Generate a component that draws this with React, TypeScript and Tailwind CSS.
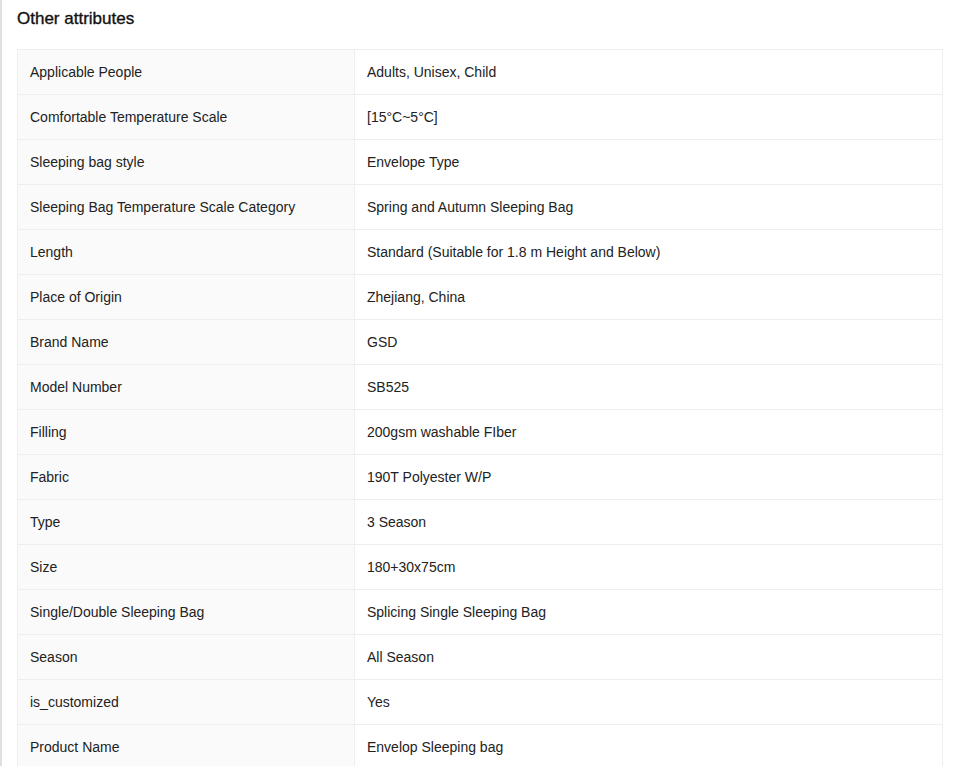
import React from "react";

const rows: [string, string][] = [
  ["Applicable People", "Adults, Unisex, Child"],
  ["Comfortable Temperature Scale", "[15°C~5°C]"],
  ["Sleeping bag style", "Envelope Type"],
  ["Sleeping Bag Temperature Scale Category", "Spring and Autumn Sleeping Bag"],
  ["Length", "Standard (Suitable for 1.8 m Height and Below)"],
  ["Place of Origin", "Zhejiang, China"],
  ["Brand Name", "GSD"],
  ["Model Number", "SB525"],
  ["Filling", "200gsm washable FIber"],
  ["Fabric", "190T Polyester W/P"],
  ["Type", "3 Season"],
  ["Size", "180+30x75cm"],
  ["Single/Double Sleeping Bag", "Splicing Single Sleeping Bag"],
  ["Season", "All Season"],
  ["is_customized", "Yes"],
  ["Product Name", "Envelop Sleeping bag"],
];

export default function App() {
  return (
    <div
      className="h-[766px] overflow-hidden bg-white border-l-2 border-[#e0e0e0] text-[#222]"
      style={{ fontFamily: '"Liberation Sans", Arial, sans-serif' }}
    >
      <div className="pl-[15px] pr-[16px]">
        <div className="pt-[7px] h-[49px] text-[17px] leading-[24px] font-normal text-[#111] [-webkit-text-stroke:0.35px_#111]">
          Other attributes
        </div>
        <div className="w-[926px] border border-[#eeeeee] text-[14px]">
          {rows.map(([k, v], i) => (
            <div
              key={i}
              className={`flex ${i > 0 ? "h-[45px] border-t border-[#eeeeee]" : "h-[44px]"}`}
            >
              <div className="w-[337px] shrink-0 bg-[#fafafa] border-r border-[#eeeeee] flex items-center pl-[12px]">
                {k}
              </div>
              <div className="flex-1 flex items-center pl-[12px]">{v}</div>
            </div>
          ))}
        </div>
      </div>
    </div>
  );
}
